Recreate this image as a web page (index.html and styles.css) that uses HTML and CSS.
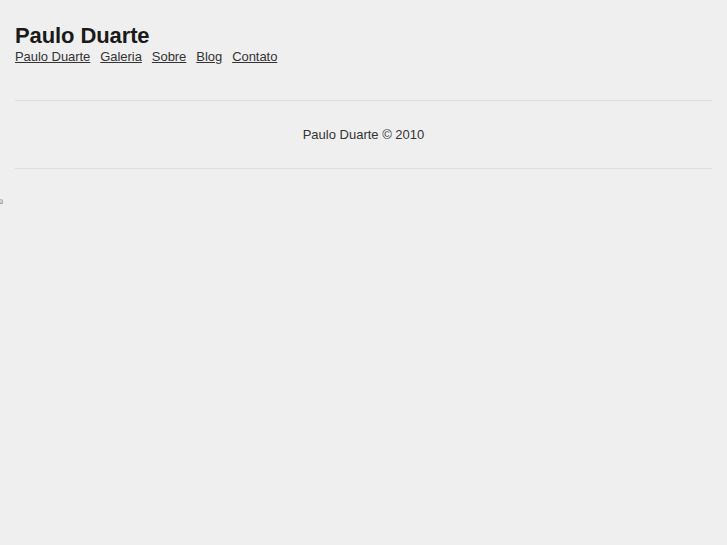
FILE: index.html
```html
<!doctype html>
<html>
<head>
  <meta charset="UTF-8" />
  <title>Paulo Duarte</title>
  <link rel="stylesheet" href="styles.css">
</head>
<body>
  <div id="header">
    <h1>Paulo Duarte</h1>
    <ul id="nav">
      <li><a href="#">Paulo Duarte</a></li>
      <li><a href="#">Galeria</a></li>
      <li><a href="#">Sobre</a></li>
      <li><a href="#">Blog</a></li>
      <li><a href="#">Contato</a></li>
    </ul>
  </div>
  <div id="footer">
    <p>Paulo Duarte &copy; 2010</p>
  </div>
  <div id="stray">ü</div>
</body>
</html>
```

FILE: styles.css
```css
html, body {
  margin: 0;
  padding: 0;
  background: #efefef;
  font-family: "Liberation Sans", Arial, sans-serif;
  color: #222;
}
#header {
  padding: 23px 15px 0 15px;
}
h1 {
  font-size: 22px;
  font-weight: bold;
  line-height: 26px;
  margin: 0;
  color: #1a1a1a;
  letter-spacing: -0.1px;
}
#nav {
  list-style: none;
  margin: 0;
  padding: 0;
  display: flex;
  gap: 10px;
  font-size: 13px;
  line-height: 16px;
  letter-spacing: -0.05px;
}
#nav a {
  color: #333;
  text-decoration: underline;
}
#footer {
  margin: 35px 15px 0 15px;
  border-top: 1px solid #dedede;
  border-bottom: 1px solid #dedede;
  text-align: center;
  font-size: 13px;
  color: #333;
}
#footer p {
  margin: 0;
  padding: 26px 0 25px 0;
  line-height: 16px;
}
#stray {
  font-size: 7px;
  line-height: 8px;
  margin: 29px 0 0 -1px;
  color: #666;
}
```
